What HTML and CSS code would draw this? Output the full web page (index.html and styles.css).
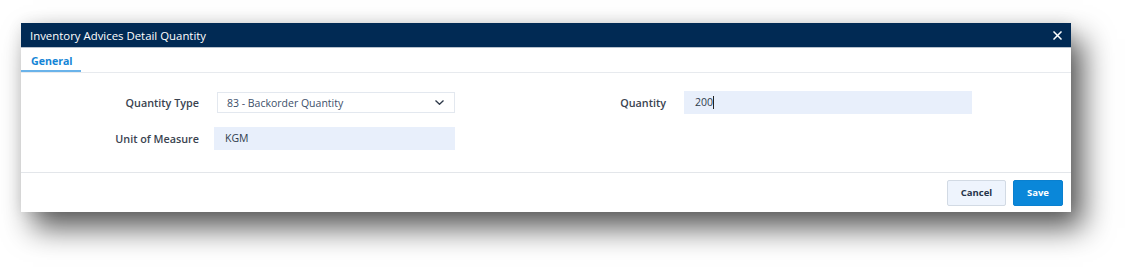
FILE: index.html
```html
<!DOCTYPE html>
<html lang="en">
<head>
  <meta charset="UTF-8">
  <title>Inventory Advices Detail Quantity</title>
  <link rel="stylesheet" href="styles.css">
</head>
<body>

  <div class="dialog">
    <div class="dialog-header">
      <span class="dialog-title">Inventory Advices Detail Quantity</span>
      <button class="close" aria-label="Close">
        <svg width="9" height="9" viewBox="0 0 9 9"><path d="M1 1L8 8M8 1L1 8" stroke="#fff" stroke-width="1.5" stroke-linecap="square"/></svg>
      </button>
    </div>

    <div class="tabs">
      <div class="tab active">General</div>
    </div>

    <div class="form">
      <label class="label">Quantity Type</label>
      <div class="select">
        <span>83 - Backorder Quantity</span>
        <svg width="9" height="5" viewBox="0 0 9 5"><path d="M0.5 0.5L4.5 4.3L8.5 0.5" fill="none" stroke="#2d3848" stroke-width="1.3"/></svg>
      </div>
      <label class="label label-right">Quantity</label>
      <div class="input">200<span class="caret"></span></div>

      <label class="label">Unit of Measure</label>
      <div class="input">KGM</div>
    </div>

    <div class="footer">
      <button class="btn btn-cancel">Cancel</button>
      <button class="btn btn-save">Save</button>
    </div>
  </div>

</body>
</html>
```

FILE: styles.css
```css
html, body { margin: 0; background: #fff; }
body {
  min-height: 267px;
  font-family: "Open Sans", "Noto Sans", sans-serif;
  font-size: 10.8px;
  color: #2f3b4c;
}

.dialog {
  width: 1050px;
  margin: 23px 0 0 21px;
  background: #fff;
  box-shadow: 12px 16px 28px rgba(0,0,0,0.65), 0 0 14px rgba(0,0,0,0.08);
}

.dialog-header {
  height: 24px;
  background: #012a54;
  border-bottom: 1px solid #b7c1cd;
  display: flex;
  align-items: center;
  justify-content: space-between;
  padding: 0 6px 0 9px;
}
.dialog-title { color: #fff; font-size: 11.4px; }
.close {
  background: none;
  border: none;
  padding: 0;
  width: 16px;
  height: 16px;
  display: flex;
  align-items: center;
  justify-content: center;
}

.tabs {
  height: 24px;
  border-bottom: 1px solid #e7eaee;
  display: flex;
}
.tab {
  width: 60px;
  box-sizing: border-box;
  padding-left: 10px;
  line-height: 26px;
  font-size: 10.6px;
  font-weight: 700;
  color: #1485d6;
}
.tab.active { box-shadow: inset 0 -2px 0 #6ab3ea; }

.form {
  display: grid;
  grid-template-columns: 193px 241px 229px 288px;
  grid-auto-rows: 23px;
  row-gap: 13px;
  align-items: center;
  padding: 18px 0 22px;
  border-bottom: 1px solid #e3e6ea;
}
.label {
  text-align: right;
  padding-right: 15px;
  font-weight: 600;
  color: #3a4350;
}
.label-right { padding-right: 18px; }

.select {
  height: 21px;
  margin-left: 3px;
  box-sizing: border-box;
  border: 1px solid #e3e8ef;
  display: flex;
  align-items: center;
  justify-content: space-between;
  padding: 0 10px 0 9px;
  font-size: 10.5px;
  color: #3d4f6a;
}
.input {
  height: 23px;
  line-height: 23px;
  background: #e8effb;
  padding-left: 11px;
  font-size: 10.5px;
  color: #2f3b4c;
}
.caret {
  display: inline-block;
  width: 1px;
  height: 13px;
  background: #222;
  vertical-align: -3px;
}

.footer {
  height: 39px;
  display: flex;
  justify-content: flex-end;
  align-items: center;
  gap: 7px;
  padding: 0 8px;
}
.btn {
  height: 26px;
  font-family: "Open Sans", "Noto Sans", sans-serif;
  font-size: 9.5px;
  font-weight: 700;
  border-radius: 2px;
}
.btn-cancel {
  width: 59px;
  background: #eef4fd;
  border: 1px solid #d2dae4;
  color: #26354a;
}
.btn-save {
  width: 50px;
  background: #0a87d9;
  border: 1px solid #0a80cf;
  color: #fff;
}
```
